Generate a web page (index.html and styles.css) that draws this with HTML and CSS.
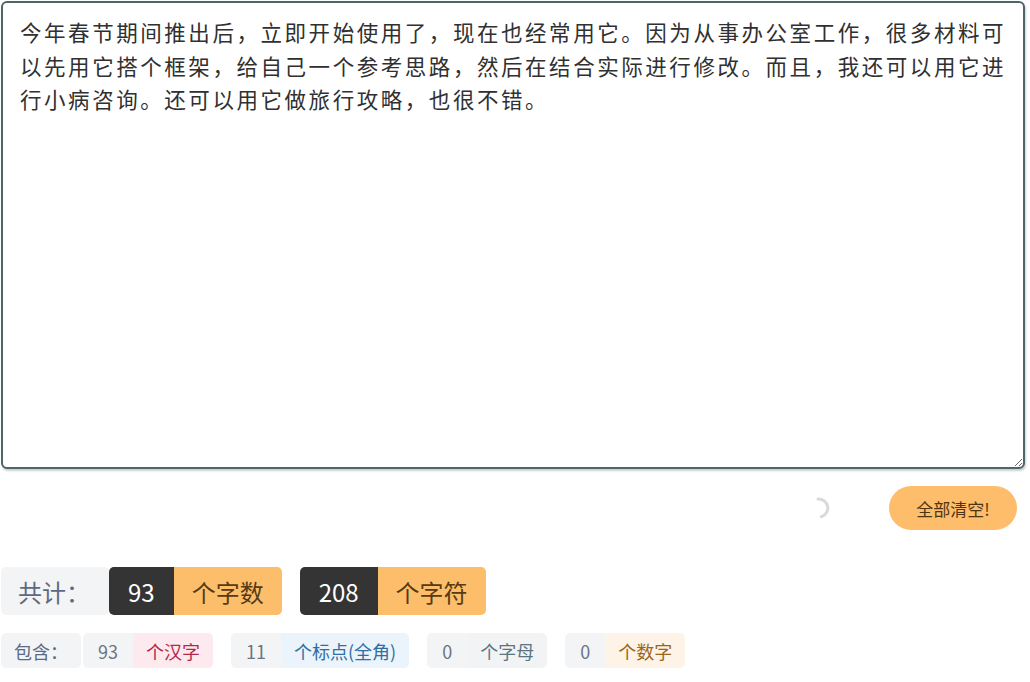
FILE: index.html
```html
<!DOCTYPE html>
<html lang="zh-CN">
<head>
<meta charset="utf-8">
<title>字数统计</title>
<link rel="stylesheet" href="styles.css">
</head>
<body>
<div class="page">
  <textarea class="editor">今年春节期间推出后，立即开始使用了，现在也经常用它。因为从事办公室工作，很多材料可以先用它搭个框架，给自己一个参考思路，然后在结合实际进行修改。而且，我还可以用它进行小病咨询。还可以用它做旅行攻略，也很不错。</textarea>

  <div class="actions">
    <svg class="spinner" width="24" height="24" viewBox="0 0 24 24" aria-hidden="true">
      <path d="M11 3.1 A9 9 0 0 1 14.3 20.7" fill="none" stroke="#d9d9d9" stroke-width="3" stroke-linecap="round"/>
    </svg>
    <button class="clear-btn">全部清空!</button>
  </div>

  <div class="totals">
    <span class="label">共计：</span>
    <span class="badge"><span class="num">93</span><span class="unit">个字数</span></span>
    <span class="badge"><span class="num">208</span><span class="unit">个字符</span></span>
  </div>

  <div class="details">
    <span class="group">
      <span class="dlabel">包含：</span>
      <span class="dnum">93</span><span class="dunit pink">个汉字</span>
    </span>
    <span class="group">
      <span class="dnum">11</span><span class="dunit blue">个标点(全角)</span>
    </span>
    <span class="group">
      <span class="dnum">0</span><span class="dunit slate">个字母</span>
    </span>
    <span class="group">
      <span class="dnum">0</span><span class="dunit amber">个数字</span>
    </span>
  </div>
</div>
</body>
</html>
```

FILE: styles.css
```css
* { box-sizing: border-box; }

html, body {
  margin: 0;
  padding: 0;
  background: #ffffff;
}

body {
  font-family: "Noto Sans CJK SC", "Noto Sans", sans-serif;
  color: #333333;
}

.page {
  padding: 1px 0 0 1px;
  width: 1030px;
}

.editor {
  display: block;
  width: 1024px;
  height: 468px;
  margin: 0;
  padding: 12px 14px 14px 17px;
  border: 2px solid #4e6569;
  border-radius: 6px;
  box-shadow: 1px 2px 2px rgba(78, 101, 105, 0.3);
  font-family: "Noto Sans CJK SC", sans-serif;
  font-size: 21.5px;
  letter-spacing: 2.55px;
  line-height: 33.5px;
  color: #303030;
  background: #ffffff;
  outline: none;
  resize: both;
}

.actions {
  display: flex;
  justify-content: flex-end;
  align-items: center;
  gap: 58px;
  margin-top: 17px;
  padding-right: 8px;
  width: 1024px;
}

.spinner {
  display: block;
  flex: none;
}

.clear-btn {
  width: 128px;
  height: 44px;
  border: none;
  border-radius: 22px;
  background: #fdbd6a;
  color: #4f3612;
  font-family: "Noto Sans CJK SC", sans-serif;
  font-size: 17px;
  padding: 0;
}

.totals {
  display: flex;
  align-items: stretch;
  height: 48px;
  margin-top: 37px;
  font-size: 24px;
}

.label {
  display: flex;
  align-items: center;
  padding: 0 17px;
  background: #f3f4f5;
  color: #5d6a84;
  border-radius: 5px;
  width: 108px;
}

.badge {
  display: flex;
  margin-right: 18px;
  border-radius: 5px;
  overflow: hidden;
}

.num {
  display: flex;
  align-items: center;
  padding: 0 19px;
  background: #343434;
  color: #ffffff;
}

.unit {
  display: flex;
  align-items: center;
  padding: 0 18px;
  background: #fdbe6b;
  color: #573a12;
}

.details {
  display: flex;
  gap: 18px;
  height: 35px;
  margin-top: 18px;
  font-size: 18px;
}

.group {
  display: flex;
  align-items: stretch;
}

.dlabel {
  display: flex;
  align-items: center;
  padding: 0 13px;
  background: #f3f4f5;
  color: #5d6a84;
  border-radius: 5px;
  margin-right: 2px;
  width: 80px;
}

.dnum {
  display: flex;
  align-items: center;
  padding: 0 15px;
  background: #f3f4f5;
  color: #6b7484;
  border-radius: 5px 0 0 5px;
}

.dunit {
  display: flex;
  align-items: center;
  padding: 0 13px;
  border-radius: 0 5px 5px 0;
}

.pink { background: #fdeaef; color: #b5284b; }
.blue { background: #ebf4fb; color: #2f6fa6; }
.slate { background: #f1f3f5; color: #5c7482; }
.amber { background: #fdf4e7; color: #9c661a; }
```
